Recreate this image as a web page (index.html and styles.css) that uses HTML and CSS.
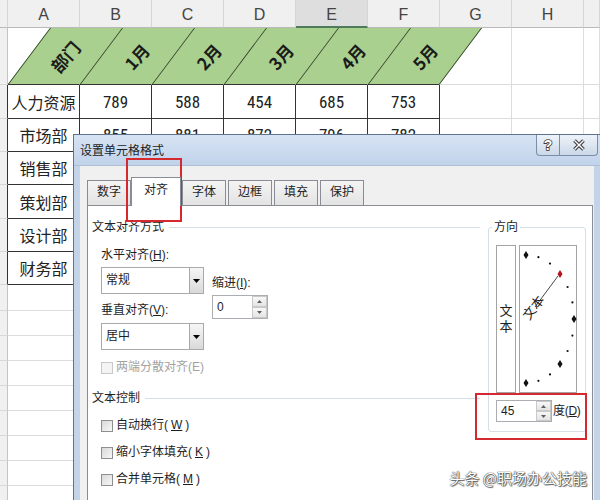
FILE: index.html
```html
<!DOCTYPE html>
<html lang="zh-CN">
<head>
    <meta charset="UTF-8">
    <title>设置单元格格式</title>
    <link rel="stylesheet" href="styles.css">
</head>
<body>
    <div class="sheet">
        <div class="ch corner"></div><div class="ch">A</div><div class="ch">B</div><div class="ch">C</div><div class="ch">D</div><div class="ch sel">E</div><div class="ch">F</div><div class="ch">G</div><div class="ch">H</div><div class="ch"></div>

        <div class="rh"></div>
        <div class="sl"><div class="para"></div><span>部门</span></div>
        <div class="sl"><div class="para"></div><span>1月</span></div>
        <div class="sl"><div class="para"></div><span>2月</span></div>
        <div class="sl"><div class="para"></div><span>3月</span></div>
        <div class="sl"><div class="para"></div><span>4月</span></div>
        <div class="sl"><div class="para last"></div><span>5月</span></div>
        <div></div><div></div><div></div>

        <div class="rh edge"></div><div class="d">人力资源</div><div class="d num">789</div><div class="d num">588</div><div class="d num">454</div><div class="d num">685</div><div class="d num">753</div><div></div><div></div><div></div>
        <div class="rh edge"></div><div class="d">市场部</div><div class="d num">855</div><div class="d num">881</div><div class="d num">872</div><div class="d num">796</div><div class="d num">782</div><div></div><div></div><div></div>
        <div class="rh edge"></div><div class="d">销售部</div><div class="d num">623</div><div class="d num">745</div><div class="d num">918</div><div class="d num">564</div><div class="d num">689</div><div></div><div></div><div></div>
        <div class="rh edge"></div><div class="d">策划部</div><div class="d num">512</div><div class="d num">634</div><div class="d num">701</div><div class="d num">593</div><div class="d num">648</div><div></div><div></div><div></div>
        <div class="rh edge"></div><div class="d">设计部</div><div class="d num">698</div><div class="d num">577</div><div class="d num">626</div><div class="d num">710</div><div class="d num">664</div><div></div><div></div><div></div>
        <div class="rh edge"></div><div class="d">财务部</div><div class="d num">431</div><div class="d num">502</div><div class="d num">487</div><div class="d num">519</div><div class="d num">466</div><div></div><div></div><div></div>

        <div class="rh"></div><div></div><div></div><div></div><div></div><div></div><div></div><div></div><div></div><div></div>
        <div class="rh"></div><div></div><div></div><div></div><div></div><div></div><div></div><div></div><div></div><div></div>
        <div class="rh"></div><div></div><div></div><div></div><div></div><div></div><div></div><div></div><div></div><div></div>
        <div class="rh"></div><div></div><div></div><div></div><div></div><div></div><div></div><div></div><div></div><div></div>
        <div class="rh"></div><div></div><div></div><div></div><div></div><div></div><div></div><div></div><div></div><div></div>
        <div class="rh"></div><div></div><div></div><div></div><div></div><div></div><div></div><div></div><div></div><div></div>
        <div class="rh"></div><div></div><div></div><div></div><div></div><div></div><div></div><div></div><div></div><div></div>
        <div class="rh"></div><div></div><div></div><div></div><div></div><div></div><div></div><div></div><div></div><div></div>
        <div class="rh"></div><div></div><div></div><div></div><div></div><div></div><div></div><div></div><div></div><div></div>
    </div>

    <div class="dialog">
        <div class="titlebar">
            <span class="title">设置单元格格式</span>
            <span class="cap help"><svg width="12" height="16" viewBox="0 0 12 16"><text x="6" y="13" text-anchor="middle" class="cap-glyph">?</text></svg></span>
            <span class="cap close"><svg width="14" height="12" viewBox="0 0 14 12"><path class="x-out" d="M2.5 1.5L11.5 10.5M11.5 1.5L2.5 10.5"/><path class="x-in" d="M2.5 1.5L11.5 10.5M11.5 1.5L2.5 10.5"/></svg></span>
        </div>
        <div class="client">
            <div class="tabs">
                <span class="tab">数字</span>
                <span class="tab active">对齐</span>
                <span class="tab">字体</span>
                <span class="tab">边框</span>
                <span class="tab">填充</span>
                <span class="tab">保护</span>
            </div>
            <div class="panel">
                <div class="left">
                    <div class="group-head"><span>文本对齐方式</span><i></i></div>
                    <div class="align-block">
                        <div class="col-a">
                            <div class="lbl">水平对齐(<u>H</u>):</div>
                            <div class="combo">常规<b class="drop"><svg width="7" height="4" viewBox="0 0 7 4"><path d="M0 0h7L3.5 4z"/></svg></b></div>
                            <div class="lbl second">垂直对齐(<u>V</u>):</div>
                            <div class="combo">居中<b class="drop"><svg width="7" height="4" viewBox="0 0 7 4"><path d="M0 0h7L3.5 4z"/></svg></b></div>
                        </div>
                        <div class="col-b">
                            <div class="lbl">缩进(<u>I</u>):</div>
                            <div class="spin">
                                <span class="val">0</span>
                                <span class="arrows">
                                    <b><svg width="5" height="3" viewBox="0 0 5 3"><path d="M0 3h5L2.5 0z"/></svg></b>
                                    <b><svg width="5" height="3" viewBox="0 0 5 3"><path d="M0 0h5L2.5 3z"/></svg></b>
                                </span>
                            </div>
                        </div>
                    </div>
                    <div class="chk off"><i class="box"></i>两端分散对齐(E)</div>
                    <div class="group-head ctrl"><span>文本控制</span><i></i></div>
                    <div class="chk"><i class="box"></i>自动换行(<u>W</u>)</div>
                    <div class="chk"><i class="box"></i>缩小字体填充(<u>K</u>)</div>
                    <div class="chk"><i class="box"></i>合并单元格(<u>M</u>)</div>
                </div>

                <fieldset class="orient">
                    <legend>方向</legend>
                    <div class="orient-boxes">
                        <div class="vtext">文<br>本</div>
                        <div class="dial">
                            <svg width="56" height="146" viewBox="1 1 56 146">
                                <g fill="#111">
                                    <path d="M7 6l2.5 4-2.5 4-2.5-4z"/>
                                    <path d="M55 70l2.5 4-2.5 4-2.5-4z"/>
                                    <path d="M41 115l2.5 4-2.5 4-2.5-4z"/>
                                    <path d="M7 134l2.5 4-2.5 4-2.5-4z"/>
                                    <circle cx="19.4" cy="12.2" r="1.1"/>
                                    <circle cx="31" cy="18.6" r="1.1"/>
                                    <circle cx="48.6" cy="42" r="1.1"/>
                                    <circle cx="53.4" cy="57.4" r="1.1"/>
                                    <circle cx="53.4" cy="90.6" r="1.1"/>
                                    <circle cx="48.6" cy="106" r="1.1"/>
                                    <circle cx="31" cy="129.4" r="1.1"/>
                                    <circle cx="19.4" cy="135.8" r="1.1"/>
                                </g>
                                <path d="M41 25l2.5 4-2.5 4-2.5-4z" fill="#b3141c"/>
                                <path d="M16 62L39 31" stroke="#333" stroke-width="0.9"/>
                                <text x="15" y="67" text-anchor="middle" transform="rotate(-53 15 63)" class="dial-text">文本</text>
                            </svg>
                        </div>
                    </div>
                    <div class="deg-row">
                        <div class="spin deg">
                            <span class="val">45</span>
                            <span class="arrows">
                                <b><svg width="5" height="3" viewBox="0 0 5 3"><path d="M0 3h5L2.5 0z"/></svg></b>
                                <b><svg width="5" height="3" viewBox="0 0 5 3"><path d="M0 0h5L2.5 3z"/></svg></b>
                            </span>
                        </div>
                        <span class="deg-unit">度(<u>D</u>)</span>
                    </div>
                </fieldset>
            </div>
        </div>
    </div>

    <div class="mark mark-tab"></div>
    <div class="mark mark-deg"></div>
    <div class="watermark">头条 @职场办公技能</div>
</body>
</html>
```

FILE: styles.css
```css
* {
    box-sizing: border-box;
}
body {
    margin: 0;
    width: 600px;
    height: 500px;
    overflow: hidden;
    position: relative;
    background: #fff;
    font-family: "Noto Sans CJK SC", sans-serif;
}

/* spreadsheet */
.sheet {
    display: grid;
    grid-template-columns: 8px repeat(8, 72px) 16px;
    grid-template-rows: 28px 57px 34px 33px 33px 34px 33px 33px 26px repeat(8, 25px);
}
.sheet > div {
    background: #fff;
    border-right: 1px solid #dcdcdc;
    border-bottom: 1px solid #dcdcdc;
}
.sheet > .ch {
    background: #f0f0f0;
    border-right-color: #d5d5d5;
    border-bottom-color: #b9b9b9;
    text-align: center;
    font: 16px/24px "Liberation Sans", sans-serif;
    color: #444;
    padding-top: 3px;
}
.sheet > .ch.sel {
    background: #dedede;
    border-bottom: 2px solid #4f7a5c;
}
.sheet > .rh {
    background: #f0f0f0;
    border-right-color: #c4c4c4;
    border-bottom-color: #d8d8d8;
}
.sheet > .rh.edge {
    border-right-color: #333;
}
.sheet > .sl {
    display: grid;
    border-bottom-color: #333;
}
.para {
    grid-area: 1 / 1;
    width: calc(100% + 1px);
    background: #a9d08e;
    border-left: 1px solid #2c3d23;
    transform-origin: 0 100%;
    transform: skewX(-36.87deg);
}
.para.last {
    border-right: 1px solid #2c3d23;
}
.sl span {
    grid-area: 1 / 1;
    place-self: center;
    transform: translateX(21px) rotate(-48deg);
    font-weight: bold;
    font-size: 17px;
    color: #1b1b1b;
    white-space: nowrap;
}
.sheet > .d {
    display: flex;
    align-items: center;
    justify-content: center;
    border-right-color: #333;
    border-bottom-color: #333;
    font-size: 16px;
    color: #222;
}
.sheet > .num {
    font: 17px "Liberation Sans Narrow", "Roboto Condensed", Roboto, sans-serif;
}

/* dialog */
.dialog {
    position: absolute;
    left: 73px;
    top: 134px;
    width: 528px;
    height: 380px;
    display: flex;
    flex-direction: column;
    background: #c3d3e8;
    border: 1px solid #60738d;
    font: 12px/15px "Liberation Sans", "Noto Sans CJK SC", sans-serif;
    color: #1e1e1e;
}
.titlebar {
    height: 31px;
    display: flex;
    align-items: flex-start;
    background: linear-gradient(#d6e3f4, #c1d3ea);
    border-bottom: 1px solid #aebfd6;
}
.title {
    flex: 1;
    margin: 9px 0 0 6px;
}
.cap {
    height: 21px;
    display: flex;
    align-items: center;
    justify-content: center;
    background: linear-gradient(#eef3fa, #cbd8e8);
    border: 1px solid #7a8ea9;
    border-top: none;
}
.cap.help {
    width: 24px;
    border-radius: 0 0 0 4px;
}
.cap.close {
    width: 38px;
    margin-right: 2px;
    border-left: none;
    border-radius: 0 0 4px 0;
}
.cap-glyph {
    font: bold 14px "Liberation Sans", sans-serif;
    fill: #fff;
    stroke: #3a3a3a;
    stroke-width: 1.6;
    paint-order: stroke;
}
.x-out {
    stroke: #3a3a3a;
    stroke-width: 3.6;
    fill: none;
}
.x-in {
    stroke: #fff;
    stroke-width: 1.4;
    fill: none;
}
.client {
    flex: 1;
    display: flex;
    flex-direction: column;
    margin: 0 6px;
    padding: 11px 1px 0 7px;
    background: #f0f0f0;
}
.tabs {
    display: flex;
    align-items: flex-end;
    height: 28px;
}
.tab {
    width: 44px;
    height: 25px;
    margin-right: 2px;
    text-align: center;
    line-height: 23px;
    border: 1px solid #898c95;
    border-bottom: none;
    background: linear-gradient(#f4f4f4, #e3e3e3);
}
.tab.active {
    position: relative;
    z-index: 1;
    width: 50px;
    height: 29px;
    margin: 0 1px -1px -2px;
    padding-top: 1px;
    background: #fff;
}
.panel {
    flex: 1;
    display: flex;
    align-items: flex-start;
    background: #fff;
    border: 1px solid #898c95;
    padding: 14px 6px 0 4px;
}
.left {
    width: 388px;
    flex: none;
}
.group-head {
    display: flex;
    align-items: center;
    gap: 5px;
}
.group-head i {
    flex: 1;
    height: 1px;
    background: #d5dfe5;
}
.group-head.ctrl {
    margin: 16px 0 1px;
}
.align-block {
    display: flex;
    gap: 8px;
    margin: 13px 0 0 9px;
}
.col-a {
    width: 103px;
}
.col-b {
    width: 56px;
    padding-top: 28px;
}
.lbl.second {
    margin-top: 9px;
}
.combo {
    display: flex;
    align-items: center;
    height: 27px;
    margin-top: 4px;
    padding-left: 4px;
    border: 1px solid #a9a9a9;
    background: #fff;
}
.lbl.second + .combo {
    margin-top: 5px;
}
.drop {
    margin-left: auto;
    width: 14px;
    height: 25px;
    display: flex;
    align-items: center;
    justify-content: center;
    border-left: 1px solid #a9a9a9;
    background: linear-gradient(#f6f6f6, #d9d9d9);
}
.spin {
    display: flex;
    width: 56px;
    height: 24px;
    margin-top: 4px;
    border: 1px solid #abadb3;
    background: #fff;
}
.spin .val {
    flex: 1;
    align-self: center;
    padding-left: 4px;
}
.arrows {
    width: 15px;
    display: flex;
    flex-direction: column;
}
.arrows b {
    flex: 1;
    display: flex;
    align-items: center;
    justify-content: center;
    border: 1px solid #c9c9c9;
    background: linear-gradient(#f8f8f8, #e4e4e4);
}
.arrows svg {
    fill: #5e5e5e;
}
.chk {
    display: flex;
    align-items: center;
    gap: 3px;
    margin: 12px 0 0 9px;
}
.chk.off {
    margin-top: 10px;
    color: #a2a2a2;
}
.box {
    width: 12px;
    height: 12px;
    border: 1px solid #8e8f8f;
    background: linear-gradient(135deg, #d9d9d9, #f7f7f7);
}
.chk.off .box {
    border-color: #c9c9c9;
    background: #f4f4f4;
}
.orient {
    width: 98px;
    margin: 0 0 0 8px;
    padding: 10px 4px 9px 7px;
    min-width: 0;
    border: 1px solid #d5dfe5;
    border-radius: 3px;
}
.orient legend {
    padding: 0 2px;
    margin-left: -4px;
}
.orient-boxes {
    display: flex;
}
.vtext {
    width: 20px;
    height: 148px;
    display: flex;
    align-items: center;
    justify-content: center;
    text-align: center;
    font-size: 13px;
    line-height: 16px;
    border: 1px solid #a4a4a4;
    background: #fff;
}
.dial {
    width: 58px;
    height: 148px;
    margin-left: 3px;
    border: 1px solid #a4a4a4;
    background: #fff;
}
.dial svg {
    display: block;
    overflow: visible;
}
.dial-text {
    font: 13px "Noto Sans CJK SC", sans-serif;
    fill: #222;
}
.deg-row {
    display: flex;
    align-items: center;
    gap: 1px;
    margin-top: 7px;
    white-space: nowrap;
}
.spin.deg {
    flex: none;
    height: 22px;
    margin-top: 0;
}
.deg-unit {
    letter-spacing: -0.3px;
}

/* annotations */
.mark {
    position: absolute;
    border: 2px solid #d42a2f;
}
.mark-tab {
    left: 126px;
    top: 158px;
    width: 56px;
    height: 64px;
}
.mark-deg {
    left: 475px;
    top: 393px;
    width: 112px;
    height: 47px;
}
.watermark {
    position: absolute;
    right: 13px;
    top: 469px;
    font: 15px/18px "Noto Sans CJK SC", sans-serif;
    color: #fff;
    text-shadow: 0 0 1px #333, 0 0 1px #333, 1px 1px 1px #666;
}
```
